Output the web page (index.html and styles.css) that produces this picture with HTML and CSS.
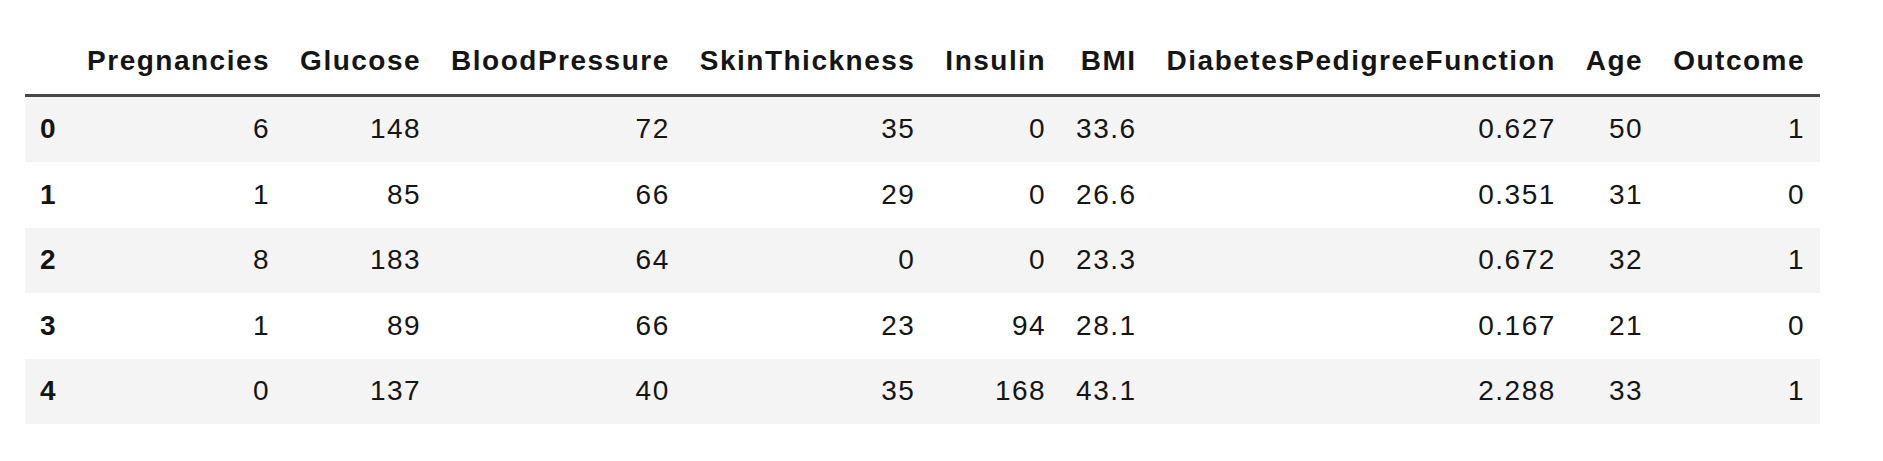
FILE: index.html
```html
<!DOCTYPE html>
<html>
<head>
<meta charset="utf-8">
<link rel="stylesheet" href="styles.css">
</head>
<body>
<div class="output">
<table class="dataframe">
  <thead>
    <tr>
      <th class="idx-head"></th>
      <th>Pregnancies</th>
      <th>Glucose</th>
      <th>BloodPressure</th>
      <th>SkinThickness</th>
      <th>Insulin</th>
      <th>BMI</th>
      <th>DiabetesPedigreeFunction</th>
      <th>Age</th>
      <th>Outcome</th>
    </tr>
  </thead>
  <tbody>
    <tr><th>0</th><td>6</td><td>148</td><td>72</td><td>35</td><td>0</td><td>33.6</td><td>0.627</td><td>50</td><td>1</td></tr>
    <tr><th>1</th><td>1</td><td>85</td><td>66</td><td>29</td><td>0</td><td>26.6</td><td>0.351</td><td>31</td><td>0</td></tr>
    <tr><th>2</th><td>8</td><td>183</td><td>64</td><td>0</td><td>0</td><td>23.3</td><td>0.672</td><td>32</td><td>1</td></tr>
    <tr><th>3</th><td>1</td><td>89</td><td>66</td><td>23</td><td>94</td><td>28.1</td><td>0.167</td><td>21</td><td>0</td></tr>
    <tr><th>4</th><td>0</td><td>137</td><td>40</td><td>35</td><td>168</td><td>43.1</td><td>2.288</td><td>33</td><td>1</td></tr>
  </tbody>
</table>
</div>
</body>
</html>
```

FILE: styles.css
```css
html, body {
  margin: 0;
  background: #ffffff;
}

.output {
  padding: 28px 0 0 25px;
}

.dataframe {
  border-collapse: collapse;
  border-spacing: 0;
  font-family: "Liberation Sans", Arial, sans-serif;
  font-size: 28px;
  letter-spacing: 1.5px;
  color: #151515;
}

.dataframe th,
.dataframe td {
  padding: 16.75px 15px;
  line-height: 32px;
  text-align: right;
  vertical-align: middle;
  white-space: nowrap;
}

.dataframe thead th {
  font-weight: bold;
  border-bottom: 3px solid #484848;
}

.dataframe tbody th {
  font-weight: bold;
  text-align: left;
}

.dataframe td {
  font-weight: normal;
}

.dataframe tbody tr:nth-child(odd) {
  background: #f4f4f4;
}
```
